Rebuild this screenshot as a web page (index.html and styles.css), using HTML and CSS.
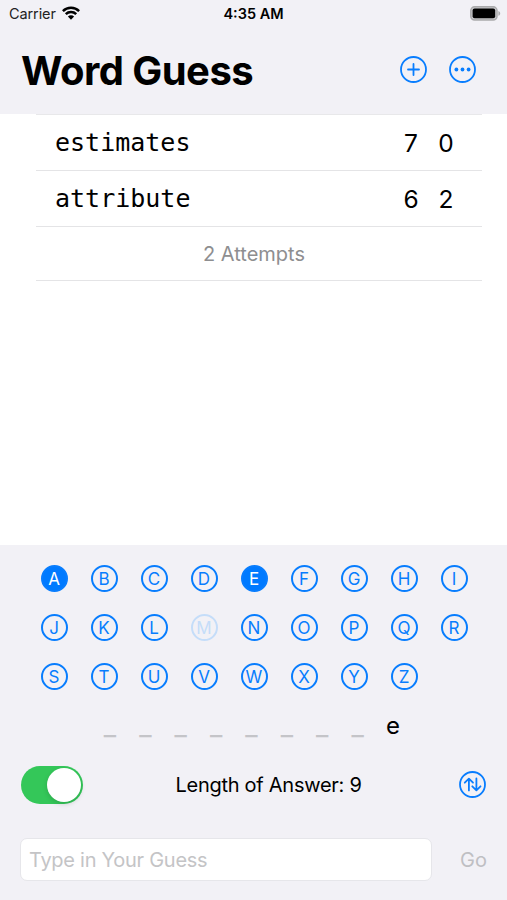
FILE: index.html
```html
<!DOCTYPE html>
<html lang="en">

<head>
    <meta charset="UTF-8">
    <meta name="viewport" content="width=device-width, initial-scale=1.0">
    <title>Word Guess</title>
    <link rel="stylesheet" href="styles.css">
</head>

<body>
    <!-- Status Bar -->
    <div class="status-bar">
        <div class="carrier">
            <span class="carrier-name">Carrier</span>
            <svg class="wifi" width="18" height="14" viewBox="0 0 18 14" fill="none" stroke="#000" stroke-width="2.5">
                <path d="M0.9 5.1a11.6 11.6 0 0 1 16.2 0" />
                <path d="M3.8 8.2a7.4 7.4 0 0 1 10.4 0" />
                <path d="M9 13.7L5.9 10.6a4.4 4.4 0 0 1 6.2 0z" fill="#000" stroke="none" />
            </svg>
        </div>
        <span class="time">4:35 AM</span>
        <svg class="battery" width="31" height="15" viewBox="0 0 31 15">
            <rect x="0.8" y="0.8" width="26.2" height="13.2" rx="3.8" fill="#c8c8cb" stroke="#aaaaac" stroke-width="1.5" />
            <rect x="2.6" y="2.6" width="22.6" height="9.6" rx="2" fill="#000" />
            <path d="M28.4 5v4.8c2.4-.7 2.4-4.1 0-4.8z" fill="#aaaaac" />
        </svg>
    </div>

    <!-- Header Section -->
    <header class="header">
        <h1>Word Guess</h1>
        <div class="actions">
            <svg class="icon" viewBox="0 0 27 27">
                <circle cx="13.5" cy="13.5" r="12.5" />
                <path d="M13.5 8v11M8 13.5h11" />
            </svg>
            <svg class="icon" viewBox="0 0 27 27">
                <circle cx="13.5" cy="13.5" r="12.5" />
                <g class="dots">
                    <circle cx="7.4" cy="13.5" r="1.9" />
                    <circle cx="13.5" cy="13.5" r="1.9" />
                    <circle cx="19.6" cy="13.5" r="1.9" />
                </g>
            </svg>
        </div>
    </header>

    <!-- Guesses -->
    <main class="guesses">
        <div class="guess">
            <span class="word">estimates</span>
            <span class="score">7</span>
            <span class="score">0</span>
        </div>
        <div class="guess">
            <span class="word">attribute</span>
            <span class="score">6</span>
            <span class="score">2</span>
        </div>
        <div class="attempts">2 Attempts</div>
    </main>

    <!-- Bottom Panel -->
    <div class="panel">
        <div class="letters">
            <span class="letter selected">A</span>
            <span class="letter">B</span>
            <span class="letter">C</span>
            <span class="letter">D</span>
            <span class="letter selected">E</span>
            <span class="letter">F</span>
            <span class="letter">G</span>
            <span class="letter">H</span>
            <span class="letter">I</span>
            <span class="letter">J</span>
            <span class="letter">K</span>
            <span class="letter">L</span>
            <span class="letter excluded">M</span>
            <span class="letter">N</span>
            <span class="letter">O</span>
            <span class="letter">P</span>
            <span class="letter">Q</span>
            <span class="letter">R</span>
            <span class="letter">S</span>
            <span class="letter">T</span>
            <span class="letter">U</span>
            <span class="letter">V</span>
            <span class="letter">W</span>
            <span class="letter">X</span>
            <span class="letter">Y</span>
            <span class="letter">Z</span>
        </div>

        <div class="answer">
            <span class="blank">_</span>
            <span class="blank">_</span>
            <span class="blank">_</span>
            <span class="blank">_</span>
            <span class="blank">_</span>
            <span class="blank">_</span>
            <span class="blank">_</span>
            <span class="blank">_</span>
            <span>e</span>
        </div>

        <div class="options">
            <div class="toggle"><div class="knob"></div></div>
            <span class="length">Length of Answer: 9</span>
            <svg class="icon" viewBox="0 0 27 27">
                <circle cx="13.5" cy="13.5" r="12.5" />
                <path d="M9.9 19.4V7.8M5.8 11.7l4.1-4.1 4.1 4.1" />
                <path d="M17.4 7.4v11.8M13.3 15.3l4.1 4.1 4.1-4.1" />
            </svg>
        </div>

        <div class="entry">
            <input type="text" class="guess-input" placeholder="Type in Your Guess">
            <span class="go">Go</span>
        </div>
    </div>
</body>

</html>
```
FILE: styles.css
```css
/* Base Styles */
* {
    box-sizing: border-box;
}

body {
    margin: 0;
    height: 900px;
    display: flex;
    flex-direction: column;
    overflow: hidden;
    font-family: Inter, "Liberation Sans", sans-serif;
    color: #000;
    background-color: #fff;
}

/* Status Bar */
.status-bar {
    height: 27px;
    padding: 0 6px 0 9px;
    display: grid;
    grid-template-columns: 1fr auto 1fr;
    align-items: center;
    background-color: #f2f1f6;
    font-size: 14.5px;
}

.carrier {
    display: flex;
    align-items: center;
    gap: 6px;
    color: #222;
}

.carrier-name {
    letter-spacing: -0.1px;
}

.wifi {
    margin-top: -2px;
}

.time {
    margin-right: 3px;
    font-weight: 600;
}

.battery {
    justify-self: end;
}

/* Header */
.header {
    height: 87px;
    padding: 0 31px 1px 21px;
    display: flex;
    justify-content: space-between;
    align-items: center;
    background-color: #f2f1f6;
}

h1 {
    margin: 0;
    font-size: 40px;
    font-weight: 700;
    letter-spacing: -0.55px;
}

.actions {
    display: flex;
    gap: 22px;
    padding-bottom: 1px;
}

.icon {
    width: 27px;
    height: 27px;
    fill: none;
    stroke: #087dfe;
    stroke-width: 1.8;
    stroke-linecap: round;
    stroke-linejoin: round;
}

.dots {
    fill: #087dfe;
    stroke: none;
}

/* Guesses */
.guesses {
    flex: 1;
    margin: 0 25px 0 36px;
    border-top: 1px solid #e8e8ea;
}

.guess {
    height: 56px;
    padding: 0 26px 0 19px;
    display: flex;
    align-items: center;
    border-bottom: 1px solid #e4e4e6;
    font-size: 24.5px;
}

.word {
    flex: 1;
    font-family: "DejaVu Sans Mono", monospace;
    font-size: 25px;
}

.score {
    width: 20px;
    margin-left: 15px;
    text-align: center;
}

.attempts {
    height: 54px;
    padding-right: 10px;
    display: flex;
    align-items: center;
    justify-content: center;
    border-bottom: 1px solid #e4e4e6;
    color: #8e8e90;
    font-size: 20px;
}

/* Bottom Panel */
.panel {
    height: 355px;
    padding: 20px 20px 0;
    background-color: #f2f1f6;
}

.letters {
    margin: 0 8px 0 9px;
    display: grid;
    grid-template-columns: repeat(9, 1fr);
    justify-items: center;
    row-gap: 22px;
}

.letter {
    width: 27px;
    height: 27px;
    display: flex;
    align-items: center;
    justify-content: center;
    border: 2px solid #087dfe;
    border-radius: 50%;
    color: #087dfe;
    font-size: 17px;
}

.selected {
    background-color: #007aff;
    color: #fff;
}

.excluded {
    border-color: #c5ddf9;
    color: #c5ddf9;
}

.answer {
    height: 50px;
    margin-top: 10px;
    padding-right: 4px;
    display: grid;
    grid-template-columns: repeat(9, 35.4px);
    justify-content: center;
    align-items: center;
    text-align: center;
    font-size: 24px;
}

.blank {
    color: #c4c4c8;
    font-size: 27px;
}

.options {
    height: 39px;
    margin-top: 15px;
    padding: 0 1px;
    display: flex;
    justify-content: space-between;
    align-items: center;
}

.toggle {
    width: 62px;
    height: 38px;
    padding: 2px;
    display: flex;
    justify-content: flex-end;
    border-radius: 19px;
    background-color: #34c759;
}

.knob {
    width: 34px;
    height: 34px;
    border-radius: 50%;
    background-color: #fff;
    box-shadow: 0 2px 5px rgba(0, 0, 0, 0.15);
}

.length {
    margin-right: 5px;
    padding-top: 1px;
    font-size: 20px;
    letter-spacing: -0.27px;
}

.entry {
    margin-top: 34px;
    display: flex;
    align-items: center;
    justify-content: space-between;
}

.guess-input {
    width: 412px;
    height: 43px;
    padding: 0 8px;
    border: 1px solid #e6e6ea;
    border-radius: 7px;
    background-color: #fff;
    font-family: inherit;
    font-size: 20px;
    letter-spacing: -0.27px;
}

.guess-input::placeholder {
    color: #c4c4c6;
}

.go {
    color: #bfbfc3;
    font-size: 20px;
}
```
